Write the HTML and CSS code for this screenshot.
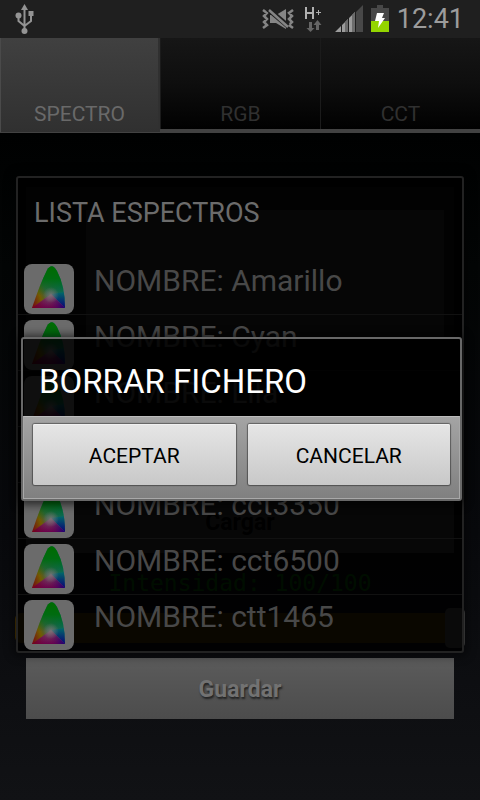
FILE: index.html
```html
<!DOCTYPE html>
<html lang="es">
<head>
<meta charset="utf-8">
<meta name="viewport" content="width=device-width, initial-scale=1">
<title>Espectros</title>
<link rel="stylesheet" href="styles.css">
</head>
<body>
<header class="status">
  <svg class="usb" width="20" height="32" viewBox="0 0 20 32" aria-label="USB">
    <g fill="none" stroke="#949494" stroke-width="2"><path d="M9.500 5v24M3.500 12v6l6 5M16 10v8l-6.500 5"/></g>
    <g fill="#949494"><path d="M9.500 1l3.500 6h-7z"/><circle cx="3.500" cy="12.500" r="3"/><rect x="13.500" y="8" width="5" height="5"/><circle cx="9.500" cy="28" r="3"/></g>
  </svg>
  <div class="indicators">
    <svg width="34" height="24" viewBox="0 0 34 24" aria-label="Silencio">
      <path fill="none" stroke="#858585" stroke-width="2.500" d="M2 3l4 3-3 3 3 3-3 3 3 3-4 3M32 3l-4 3 3 3-3 3 3 3-3 3 4 3"/>
      <path fill="#858585" d="M9 8h6l10-6v20l-10-6H9z"/>
      <path stroke="#1f1f1f" stroke-width="5" d="M7 2l20 17"/>
      <path stroke="#858585" stroke-width="2.500" d="M8 3l19 17"/>
    </svg>
    <svg class="data" width="18" height="28" viewBox="0 0 18 28" aria-label="H+">
      <path fill="none" stroke="#b0b0b0" stroke-width="2" d="M2 2v12M9 2v12M2 8h7"/>
      <path fill="none" stroke="#b0b0b0" d="M12 7.500h5M14.500 5v5"/>
      <path fill="#656565" d="M5 17h3v6h2.500L6.500 27 2.500 23H5zM12 25v-5H9.500L13.500 15l4 5H15v5z"/>
    </svg>
    <svg width="28" height="28" viewBox="0 0 28 28" aria-label="Señal">
      <path fill="#484848" d="M21 7l7-7v27h-7z"/>
      <path fill="#9c9c9c" d="M0 27l6-6v6zM7 20l6-6v13H7zM14 13l6-6v20h-6z"/>
      <path fill="#6c6c6c" d="M10 17l3-3v13h-3zM17 10l3-3v20h-3z"/>
    </svg>
    <svg width="18" height="28" viewBox="0 0 18 28" aria-label="Batería">
      <path fill="#484848" d="M6 0h6v3h6v14H0V3h6z"/><path fill="#94d500" d="M0 16h18v11H0z"/>
      <path fill="#fff" d="M6 8h7l-2 5h3L7 23l1-7H4z"/>
    </svg>
    <time class="clock">12:41</time>
  </div>
</header>
<nav class="tabs">
  <button class="tab active">SPECTRO</button>
  <button class="tab">RGB</button>
  <button class="tab">CCT</button>
</nav>
<main class="screen">
  <section class="panel">
    <div class="plot"></div>
    <button class="load">Cargar</button>
    <label class="level" for="level">Intensidad: 100/100</label>
    <input class="slider" id="level" type="range" min="0" max="100" value="100">
  </section>
  <button class="save">Guardar</button>
  <section class="list-dialog" role="dialog" aria-labelledby="list-title">
    <h2 id="list-title">LISTA ESPECTROS</h2>
    <svg class="defs" width="0" height="0" aria-hidden="true">
      <defs>
        <linearGradient id="edge" x1="0" y1="1" x2="1" y2="0.500">
          <stop offset="0" stop-color="#750011"/><stop offset="0.300" stop-color="#735b00"/><stop offset="0.500" stop-color="#38604a"/><stop offset="1" stop-color="#006a68"/>
        </linearGradient>
        <linearGradient id="top" x1="0" y1="0" x2="0" y2="1">
          <stop offset="0" stop-color="#006b00"/><stop offset="0.300" stop-color="#006b10"/><stop offset="0.700" stop-color="#006b10" stop-opacity="0"/>
        </linearGradient>
        <linearGradient id="base" x1="0" y1="0" x2="0" y2="1">
          <stop offset="0" stop-color="#705a68"/><stop offset="1" stop-color="#6a004a"/>
        </linearGradient>
        <linearGradient id="floor" x1="0" y1="0" x2="1" y2="0">
          <stop offset="0" stop-color="#750010"/><stop offset="0.500" stop-color="#700050" stop-opacity="0"/><stop offset="1" stop-color="#15007a"/>
        </linearGradient>
        <linearGradient id="blue" x1="0" y1="0" x2="0" y2="1">
          <stop offset="0" stop-color="#006a68"/><stop offset="1" stop-color="#0b0078"/>
        </linearGradient>
        <radialGradient id="white">
          <stop offset="0" stop-color="#807878" stop-opacity="0.800"/><stop offset="1" stop-color="#807878" stop-opacity="0"/>
        </radialGradient>
        <clipPath id="gamut"><path d="M8 44Q16 20 23 6Q28-2 33 7Q41 22 41 44z"/></clipPath>
        <symbol id="chroma" viewBox="0 0 50 50">
          <rect width="50" height="50" rx="8" fill="#6b6b6b"/>
          <g clip-path="url(#gamut)">
            <path fill="url(#edge)" d="M8 2h33v42H8z"/>
            <path fill="url(#top)" d="M8 2h33v42H8z"/>
            <path fill="url(#blue)" d="M27 30l14-2v16z"/>
            <path fill="url(#base)" d="M8 44l19-14 14 14z"/>
            <path fill="url(#floor)" d="M8 44l19-14 14 14z"/>
            <circle cx="27" cy="31" r="8" fill="url(#white)"/>
          </g>
        </symbol>
      </defs>
    </svg>
    <ul class="rows">
      <li><svg class="thumb"><use href="#chroma"/></svg><span>NOMBRE: Amarillo</span></li>
      <li><svg class="thumb"><use href="#chroma"/></svg><span>NOMBRE: Cyan</span></li>
      <li><svg class="thumb"><use href="#chroma"/></svg><span>NOMBRE: Lila</span></li>
      <li><svg class="thumb"><use href="#chroma"/></svg></li>
      <li><svg class="thumb"><use href="#chroma"/></svg><span>NOMBRE: cct3350</span></li>
      <li><svg class="thumb"><use href="#chroma"/></svg><span>NOMBRE: cct6500</span></li>
      <li><svg class="thumb"><use href="#chroma"/></svg><span>NOMBRE: ctt1465</span></li>
    </ul>
  </section>
  <section class="confirm" role="alertdialog" aria-labelledby="confirm-title">
    <h1 id="confirm-title">BORRAR FICHERO</h1>
    <div class="actions">
      <button>ACEPTAR</button>
      <button>CANCELAR</button>
    </div>
  </section>
</main>
</body>
</html>
```
FILE: styles.css
```css
* { box-sizing: border-box; }
body {
  margin: 0;
  min-height: 100vh;
  display: flex;
  flex-direction: column;
  background: #000;
  font-family: Roboto, "Liberation Sans", sans-serif;
}
h1, h2, ul { margin: 0; padding: 0; font-weight: 400; }
button { font-family: inherit; border: 0; padding: 0; }
svg { display: block; flex: none; }

.status {
  height: 38px;
  padding: 0 16px 0 15px;
  display: flex;
  align-items: center;
  justify-content: space-between;
  background: #1f1f1f;
}
.indicators { display: flex; align-items: center; gap: 8px; }
.data { margin: 0 5px 0 1px; }
.clock { font-size: 27px; line-height: 38px; color: #9c9c9c; }

.tabs {
  height: 95px;
  display: grid;
  grid-template-columns: repeat(3, 1fr);
  border-bottom: 4px solid #424242;
}
.tab {
  display: flex;
  align-items: flex-end;
  justify-content: center;
  padding-bottom: 1px;
  font-size: 21px;
  line-height: 28px;
  color: #303030;
  background: linear-gradient(#161616, #0e0e0e 50%, #010101);
  border-left: 1px solid #1b1b1b;
}
.tab.active {
  margin-bottom: -3px;
  padding-bottom: 4px;
  color: #696969;
  background: linear-gradient(#404040, #303030);
  border-left-color: #4a4a4a;
  border-right: 2px solid #303030;
}

.screen {
  flex: 1;
  position: relative;
  padding: 54px 26px 80px;
  background: linear-gradient(#000101, #030505 20%, #08090c 60%, #111215);
}
.panel { height: 471px; display: flex; flex-direction: column; }
.plot {
  height: 305px;
  border: solid #141414;
  border-width: 23px 10px 0 60px;
  background: #303030;
}
.load {
  height: 61px;
  background: #363636;
  color: #000;
  font-size: 23px;
  font-weight: 700;
}
.level {
  margin-top: 16px;
  text-align: center;
  font: 23px/28px "DejaVu Sans Mono", monospace;
  color: #006000;
}
.slider {
  appearance: none;
  height: 30px;
  margin: 16px -11px 0;
  border-radius: 6px;
  background: #4a3400;
}
.slider::-webkit-slider-thumb {
  appearance: none;
  width: 20px;
  height: 40px;
  border-radius: 5px;
  background: #484848;
}
.save {
  display: block;
  width: 100%;
  height: 61px;
  padding-top: 2px;
  background: linear-gradient(#5b5b5b, #4c4c4c);
  color: #727272;
  font-size: 23px;
  font-weight: 700;
  text-shadow: 1px 2px 2px #222;
}

.list-dialog {
  position: absolute;
  top: 43px;
  left: 16px;
  right: 16px;
  border: 2px solid #222;
  border-radius: 3px;
  background: rgba(0, 0, 0, 0.86);
  box-shadow: 0 0 8px 4px rgba(0, 0, 0, 0.4);
}
.list-dialog h2 {
  padding: 16px 16px 0;
  height: 81px;
  font-size: 27px;
  line-height: 38px;
  color: #6b6b6b;
}
.defs { position: absolute; }
.rows { list-style: none; }
.rows li {
  height: 56px;
  padding: 5px 6px 0;
  display: flex;
  gap: 20px;
  border-bottom: 1px solid #111;
}
.rows li:last-child { border-bottom: 0; }
.rows span { font-size: 30px; line-height: 34px; color: #484848; }
.thumb { width: 50px; height: 50px; }

.confirm {
  position: absolute;
  top: 204px;
  left: 21px;
  right: 18px;
  border: 2px solid #686868;
  border-radius: 3px;
  background: rgba(0, 0, 0, 0.86);
  box-shadow: 0 1px 8px 3px rgba(0, 0, 0, 0.6);
}
.confirm h1 {
  padding: 4px 16px 0;
  height: 77px;
  font-size: 33px;
  line-height: 78px;
  color: #fff;
}
.actions {
  display: grid;
  grid-template-columns: 1fr 1fr;
  gap: 12px;
  padding: 7px 9px 13px;
  border: 1px solid #a8a8a8;
  border-top-color: #bcbcbc;
  background: linear-gradient(#a4a4a4, #808080);
}
.actions button {
  height: 61px;
  border-radius: 2px;
  background: linear-gradient(#e6e6e6, #c8c8c8);
  box-shadow: 0 0 1px 1px rgba(0, 0, 0, 0.4), inset 0 1px #f0f0f0;
  font-size: 21px;
  padding-top: 2px;
  color: #000;
}
```
